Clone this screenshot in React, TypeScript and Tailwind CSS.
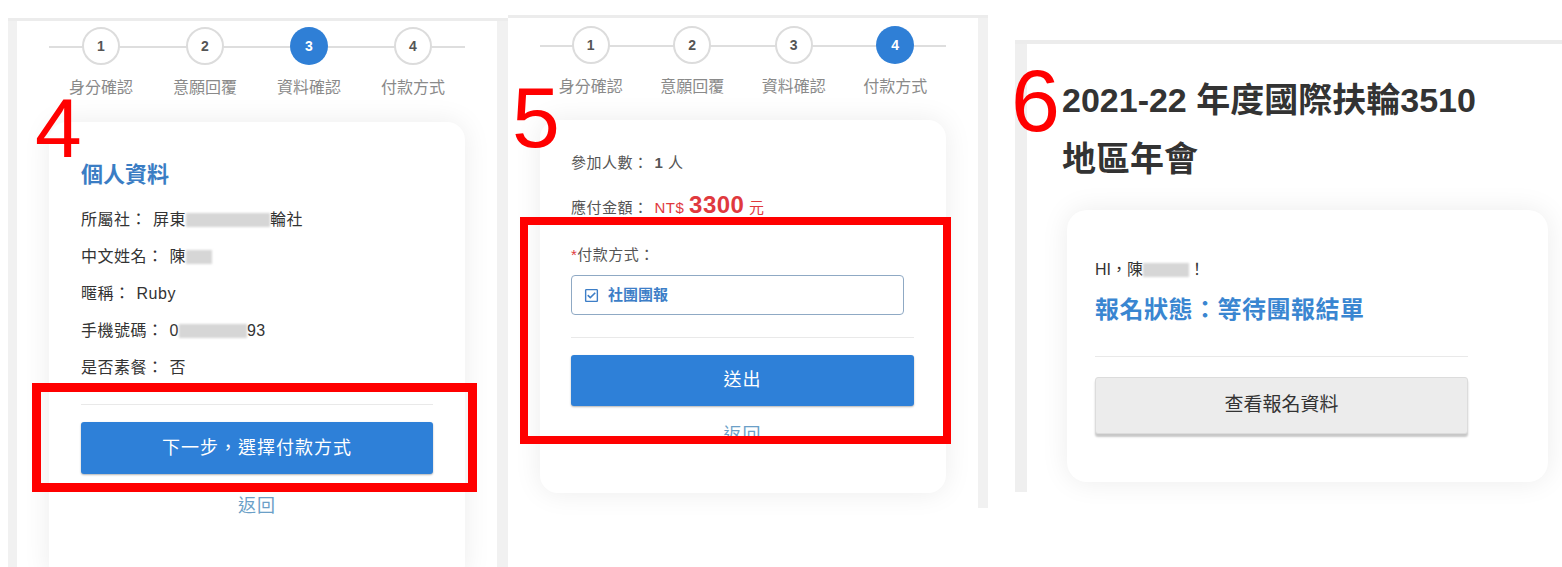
import { FaRegCheckSquare } from "react-icons/fa";

const steps = ["身分確認", "意願回覆", "資料確認", "付款方式"];

function Stepper({ active }: { active: number }) {
  return (
    <div className="relative grid grid-cols-4">
      <div className="absolute left-0 right-0 top-[19px] h-[2px] bg-[#dedede]" />
      {steps.map((s, i) => (
        <div key={s} className="relative flex flex-col items-center">
          {i + 1 === active ? (
            <div className="flex h-[38px] w-[38px] items-center justify-center rounded-full bg-[#2f7fd6] text-[14px] font-bold text-white">
              {i + 1}
            </div>
          ) : (
            <div className="flex h-[38px] w-[38px] items-center justify-center rounded-full border-2 border-[#dcdcdc] bg-white text-[14px] font-bold text-[#555]">
              {i + 1}
            </div>
          )}
          <div className="mt-[13px] text-[16px] leading-[20px] text-[#8a8a8a]">{s}</div>
        </div>
      ))}
    </div>
  );
}

function Blur({ w }: { w: number }) {
  return (
    <span
      className="inline-block h-[14px] bg-[#d6d6d6] align-[-2px] blur-[1px]"
      style={{ width: w }}
    />
  );
}

function Row({ label, children }: { label: string; children: React.ReactNode }) {
  return (
    <div className="text-[16px] leading-[37px] tracking-[0.5px] text-[#333]">
      {label}：<span className="ml-[6px]">{children}</span>
    </div>
  );
}

export default function App() {
  return (
    <div className="relative flex h-[567px] w-[1562px] items-start overflow-hidden bg-white font-['Liberation_Sans','Noto_Sans_CJK_TC',sans-serif]">
      {/* panel 4 */}
      <div className="ml-[8px] mt-[18px] flex h-[549px] w-[500px] border-t-[3px] border-[#ececec]">
        <div className="w-[9px] shrink-0 bg-[#f1f1f1]" />
        <div className="flex-1 px-[32px] pt-[6px]">
          <Stepper active={3} />
          <div className="mt-[24px] h-[460px] rounded-[18px] bg-white px-[32px] pt-[33px] shadow-[0_0_28px_rgba(0,0,0,0.08)]">
            <div className="text-[22px] font-bold leading-[40px] text-[#3a7dc4]">個人資料</div>
            <div className="mt-[6px]">
              <Row label="所屬社">
                屏東<Blur w={84} />輪社
              </Row>
              <Row label="中文姓名">
                陳<Blur w={26} />
              </Row>
              <Row label="暱稱">Ruby</Row>
              <Row label="手機號碼">
                0<Blur w={68} />93
              </Row>
              <Row label="是否素餐">否</Row>
            </div>
            <div className="mt-[18px] h-px bg-[#e9e9e9]" />
            <div className="mt-[17px] flex h-[52px] items-center justify-center rounded-[3px] bg-[#2e80d8] text-[18px] tracking-[1px] text-white shadow-[0_1px_2px_rgba(0,0,0,0.3)]">
              下一步，選擇付款方式
            </div>
            <div className="mt-[20px] text-center text-[18px] leading-[24px] tracking-[1px] text-[#6b9fc7]">返回</div>
          </div>
        </div>
        <div className="w-[11px] shrink-0 bg-[#f1f1f1]" />
      </div>

      {/* panel 5 */}
      <div className="mt-[15px] flex h-[493px] w-[480px] border-t-[3px] border-[#ececec]">
        <div className="flex-1 px-[32px] pt-[8px]">
          <Stepper active={4} />
          <div className="mt-[23px] rounded-[18px] bg-white pb-[46px] pl-[31px] pr-[32px] pt-[22px] shadow-[0_0_28px_rgba(0,0,0,0.08)]">
            <div className="text-[15px] leading-[42px] tracking-[0.5px] text-[#555]">
              參加人數：<span className="ml-[6px] font-bold">1</span> 人
            </div>
            <div className="text-[15px] leading-[42px] tracking-[0.5px] text-[#555]">
              應付金額：
              <span className="ml-[6px] text-[#e0393e]">
                NT$ <span className="text-[24px] font-bold">3300</span> 元
              </span>
            </div>
            <div className="mt-[14px] text-[15px] leading-[24px] tracking-[0.5px] text-[#555]">
              <span className="text-[#e0393e]">*</span>付款方式：
            </div>
            <div className="mt-[8px] flex h-[40px] w-[333px] items-center gap-[9px] rounded-[4px] border border-[#8fa9c4] px-[12px] text-[15px] font-bold text-[#3d7ec7]">
              <FaRegCheckSquare className="h-[15px] w-[15px]" />
              社團團報
            </div>
            <div className="mt-[22px] h-px bg-[#e9e9e9]" />
            <div className="mt-[17px] flex h-[51px] items-center justify-center rounded-[3px] bg-[#2e80d8] text-[18px] tracking-[1px] text-white shadow-[0_1px_2px_rgba(0,0,0,0.3)]">
              送出
            </div>
            <div className="mt-[17px] text-center text-[18px] leading-[24px] tracking-[1px] text-[#6b9fc7]">返回</div>
          </div>
        </div>
        <div className="w-[10px] shrink-0 bg-[#f1f1f1]" />
      </div>

      {/* panel 6 */}
      <div className="ml-[27px] mt-[40px] flex h-[452px] flex-1 border-t-[4px] border-[#ececec]">
        <div className="w-[12px] shrink-0 bg-[#efefef]" />
        <div className="flex-1 pt-[27px]">
          <div className="ml-[35px] text-[34px] font-bold leading-[59px] text-[#333]">
            2021-22 年度國際扶輪3510
            <br />
            地區年會
          </div>
          <div className="ml-[40px] mr-[14px] mt-[21px] rounded-[20px] bg-white pb-[48px] pl-[28px] pr-[80px] pt-[50px] shadow-[0_0_28px_rgba(0,0,0,0.08)]">
            <div className="text-[16px] leading-[20px] text-[#333]">
              HI，陳<Blur w={46} />！
            </div>
            <div className="mt-[14px] text-[24px] font-bold leading-[32px] tracking-[0.5px] text-[#3a86d1]">
              報名狀態：等待團報結單
            </div>
            <div className="mt-[30px] h-px bg-[#e9e9e9]" />
            <div className="mt-[20px] flex h-[57px] items-center justify-center rounded-[3px] border border-[#dcdcdc] bg-[#ececec] text-[19px] text-[#333] shadow-[0_3px_2px_rgba(0,0,0,0.22)]">
              查看報名資料
            </div>
          </div>
        </div>
      </div>

      {/* annotations */}
      <div className="absolute left-[35px] top-[86px] text-[84px] leading-none text-[#ff0000]">4</div>
      <div className="absolute left-[512px] top-[74px] text-[86px] leading-none text-[#ff0000]">5</div>
      <div className="absolute left-[1011px] top-[57px] text-[88px] leading-none text-[#ff0000]">6</div>
      <div className="absolute left-[32px] top-[383px] h-[109px] w-[445px] border-[9px] border-[#ff0000]" />
      <div className="absolute left-[520px] top-[217px] h-[227px] w-[431px] border-[8px] border-[#ff0000]" />
    </div>
  );
}
